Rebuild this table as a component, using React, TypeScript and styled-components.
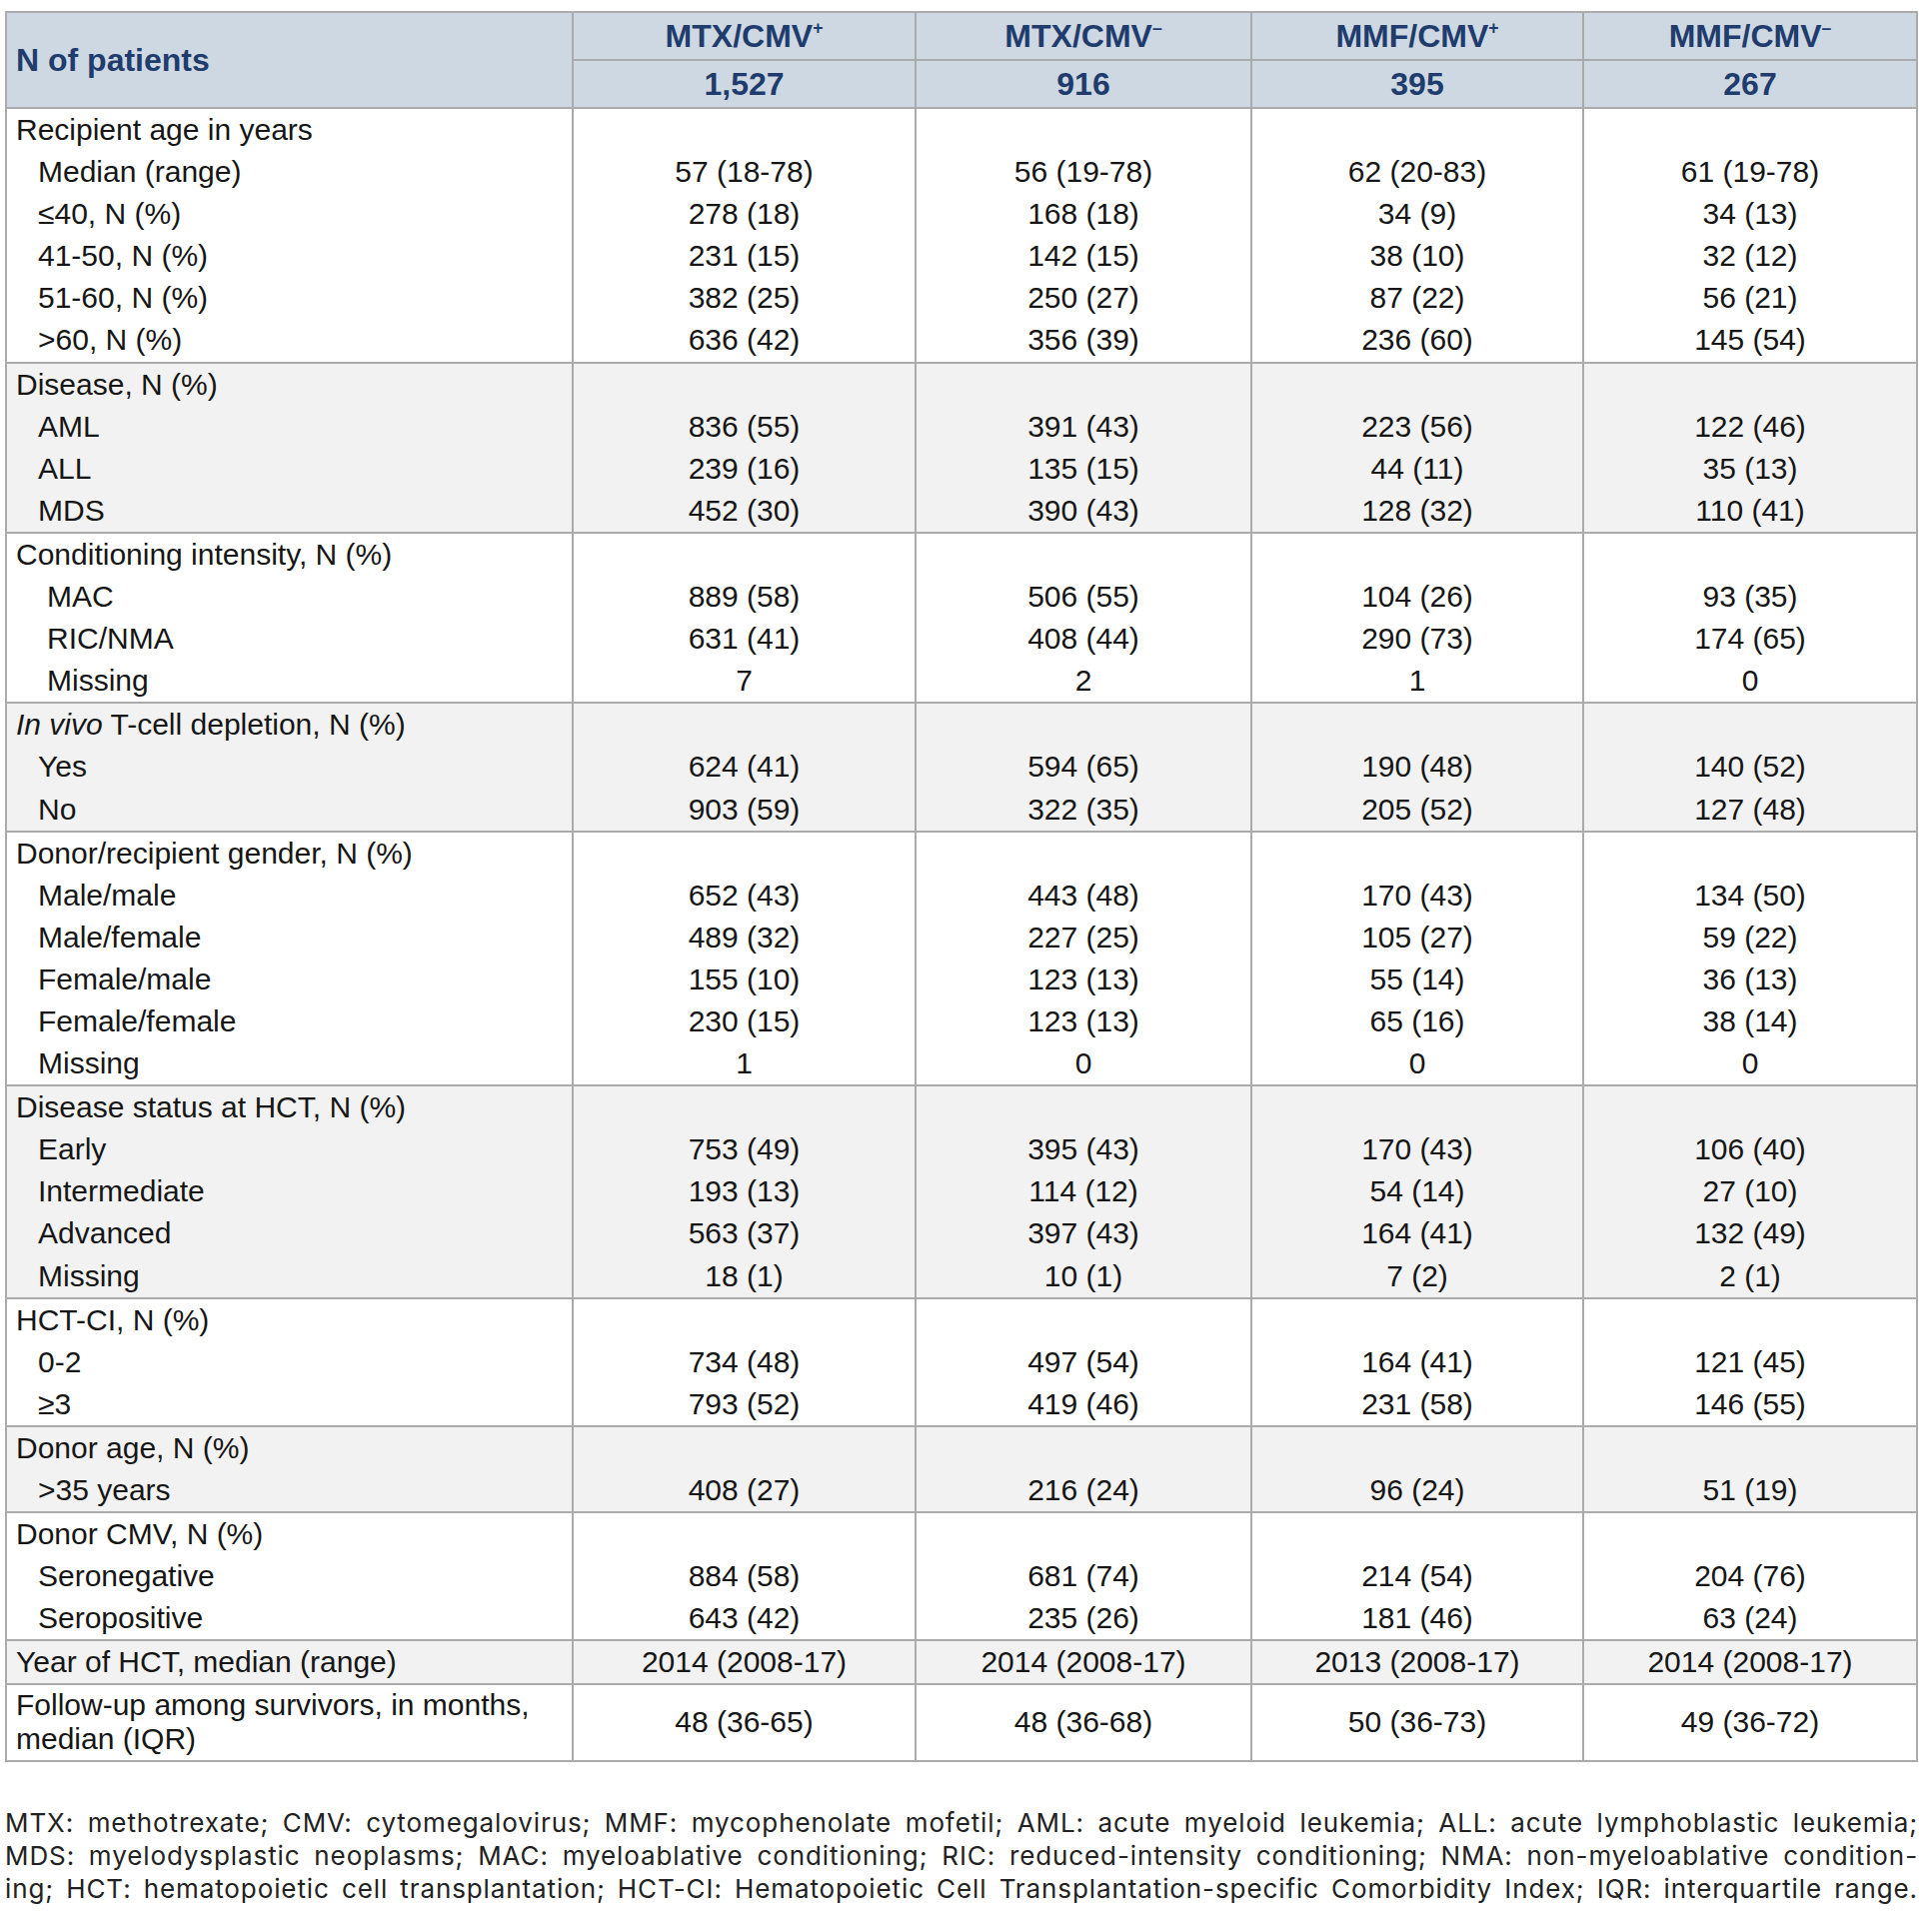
import React from "react";
import styled, { createGlobalStyle } from "styled-components";

const GlobalStyle = createGlobalStyle`
  body {
    margin: 0;
    background: #ffffff;
  }
`;

const Page = styled.div`
  padding: 11px 14px 0 5px;
`;

const Table = styled.table`
  width: 1914px;
  table-layout: fixed;
  border-collapse: collapse;
  font-family: "Liberation Sans", Arial, sans-serif;
  font-size: 30px;
  color: #161616;
  border: 2px solid #ababab;
`;

const HeadCell = styled.th<{ $left?: boolean }>`
  background: #cdd8e3;
  color: #1f3c6c;
  font-weight: 700;
  font-size: 32px;
  line-height: 36px;
  padding: 5px 0 5px ${(p) => (p.$left ? "9px" : "0")};
  text-align: ${(p) => (p.$left ? "left" : "center")};
  border: 2px solid #ababab;

  sup {
    font-size: 0.55em;
    line-height: 0;
    vertical-align: 0.75em;
  }
`;

const Group = styled.tbody<{ $shaded: boolean }>`
  background: ${(p) => (p.$shaded ? "#f2f2f2" : "#ffffff")};
  border-top: 2px solid #ababab;
`;

const LabelCell = styled.td<{ $indent: number; $compact?: boolean }>`
  padding: 3px 0 3.1px ${(p) => 9 + p.$indent}px;
  line-height: ${(p) => (p.$compact ? "34px" : "36px")};
  text-align: left;
  border-right: 2px solid #ababab;
  white-space: nowrap;
`;

const ValueCell = styled.td`
  padding: 3px 0 3.1px;
  line-height: 36px;
  text-align: center;
  vertical-align: middle;
  border-right: 2px solid #ababab;
`;

const Footnote = styled.div`
  margin-top: 44px;
  width: 1914px;
  font-family: Inter, "Open Sans", sans-serif;
  font-size: 26px;
  letter-spacing: 0.9px;
  line-height: 33px;
  color: #222222;
`;

const FootLine = styled.div`
  text-align: justify;
  text-align-last: justify;
  white-space: nowrap;
`;

type Row = { label: React.ReactNode; values: string[] };
type GroupData = {
  title: React.ReactNode;
  values?: string[];
  indent?: number;
  compact?: boolean;
  rows: Row[];
};

const groups: GroupData[] = [
  {
    title: "Recipient age in years",
    rows: [
      { label: "Median (range)", values: ["57 (18-78)", "56 (19-78)", "62 (20-83)", "61 (19-78)"] },
      { label: "≤40, N (%)", values: ["278 (18)", "168 (18)", "34 (9)", "34 (13)"] },
      { label: "41-50, N (%)", values: ["231 (15)", "142 (15)", "38 (10)", "32 (12)"] },
      { label: "51-60, N (%)", values: ["382 (25)", "250 (27)", "87 (22)", "56 (21)"] },
      { label: ">60, N (%)", values: ["636 (42)", "356 (39)", "236 (60)", "145 (54)"] },
    ],
  },
  {
    title: "Disease, N (%)",
    rows: [
      { label: "AML", values: ["836 (55)", "391 (43)", "223 (56)", "122 (46)"] },
      { label: "ALL", values: ["239 (16)", "135 (15)", "44 (11)", "35 (13)"] },
      { label: "MDS", values: ["452 (30)", "390 (43)", "128 (32)", "110 (41)"] },
    ],
  },
  {
    title: "Conditioning intensity, N (%)",
    indent: 31,
    rows: [
      { label: "MAC", values: ["889 (58)", "506 (55)", "104 (26)", "93 (35)"] },
      { label: "RIC/NMA", values: ["631 (41)", "408 (44)", "290 (73)", "174 (65)"] },
      { label: "Missing", values: ["7", "2", "1", "0"] },
    ],
  },
  {
    title: (
      <>
        <i>In vivo</i> T-cell depletion, N (%)
      </>
    ),
    rows: [
      { label: "Yes", values: ["624 (41)", "594 (65)", "190 (48)", "140 (52)"] },
      { label: "No", values: ["903 (59)", "322 (35)", "205 (52)", "127 (48)"] },
    ],
  },
  {
    title: "Donor/recipient gender, N (%)",
    rows: [
      { label: "Male/male", values: ["652 (43)", "443 (48)", "170 (43)", "134 (50)"] },
      { label: "Male/female", values: ["489 (32)", "227 (25)", "105 (27)", "59 (22)"] },
      { label: "Female/male", values: ["155 (10)", "123 (13)", "55 (14)", "36 (13)"] },
      { label: "Female/female", values: ["230 (15)", "123 (13)", "65 (16)", "38 (14)"] },
      { label: "Missing", values: ["1", "0", "0", "0"] },
    ],
  },
  {
    title: "Disease status at HCT, N (%)",
    rows: [
      { label: "Early", values: ["753 (49)", "395 (43)", "170 (43)", "106 (40)"] },
      { label: "Intermediate", values: ["193 (13)", "114 (12)", "54 (14)", "27 (10)"] },
      { label: "Advanced", values: ["563 (37)", "397 (43)", "164 (41)", "132 (49)"] },
      { label: "Missing", values: ["18 (1)", "10 (1)", "7 (2)", "2 (1)"] },
    ],
  },
  {
    title: "HCT-CI, N (%)",
    rows: [
      { label: "0-2", values: ["734 (48)", "497 (54)", "164 (41)", "121 (45)"] },
      { label: "≥3", values: ["793 (52)", "419 (46)", "231 (58)", "146 (55)"] },
    ],
  },
  {
    title: "Donor age, N (%)",
    rows: [{ label: ">35 years", values: ["408 (27)", "216 (24)", "96 (24)", "51 (19)"] }],
  },
  {
    title: "Donor CMV, N (%)",
    rows: [
      { label: "Seronegative", values: ["884 (58)", "681 (74)", "214 (54)", "204 (76)"] },
      { label: "Seropositive", values: ["643 (42)", "235 (26)", "181 (46)", "63 (24)"] },
    ],
  },
  {
    title: "Year of HCT, median (range)",
    values: ["2014 (2008-17)", "2014 (2008-17)", "2013 (2008-17)", "2014 (2008-17)"],
    rows: [],
  },
  {
    title: (
      <>
        Follow-up among survivors, in months,
        <br />
        median (IQR)
      </>
    ),
    values: ["48 (36-65)", "48 (36-68)", "50 (36-73)", "49 (36-72)"],
    compact: true,
    rows: [],
  },
];

const arms = [
  { name: "MTX/CMV", sign: "+", n: "1,527" },
  { name: "MTX/CMV", sign: "–", n: "916" },
  { name: "MMF/CMV", sign: "+", n: "395" },
  { name: "MMF/CMV", sign: "–", n: "267" },
];

function Values({ values }: { values?: string[] }) {
  return (
    <>
      {[0, 1, 2, 3].map((i) => (
        <ValueCell key={i}>{values ? values[i] : ""}</ValueCell>
      ))}
    </>
  );
}

export default function App() {
  return (
    <Page>
      <GlobalStyle />
      <Table>
        <colgroup>
          <col style={{ width: 567 }} />
          <col style={{ width: 343 }} />
          <col style={{ width: 336 }} />
          <col style={{ width: 332 }} />
          <col style={{ width: 334 }} />
        </colgroup>
        <thead>
          <tr>
            <HeadCell $left rowSpan={2}>
              N of patients
            </HeadCell>
            {arms.map((a, i) => (
              <HeadCell key={i}>
                {a.name}
                <sup>{a.sign}</sup>
              </HeadCell>
            ))}
          </tr>
          <tr>
            {arms.map((a, i) => (
              <HeadCell key={i}>{a.n}</HeadCell>
            ))}
          </tr>
        </thead>
        {groups.map((g, gi) => (
          <Group key={gi} $shaded={gi % 2 === 1}>
            <tr>
              <LabelCell $indent={0} $compact={g.compact}>
                {g.title}
              </LabelCell>
              <Values values={g.values} />
            </tr>
            {g.rows.map((r, ri) => (
              <tr key={ri}>
                <LabelCell $indent={g.indent ?? 22}>{r.label}</LabelCell>
                <Values values={r.values} />
              </tr>
            ))}
          </Group>
        ))}
      </Table>
      <Footnote>
        <FootLine>
          MTX: methotrexate; CMV: cytomegalovirus; MMF: mycophenolate mofetil; AML: acute myeloid leukemia; ALL: acute lymphoblastic leukemia;
        </FootLine>
        <FootLine>
          MDS: myelodysplastic neoplasms; MAC: myeloablative conditioning; RIC: reduced-intensity conditioning; NMA: non-myeloablative condition-
        </FootLine>
        <FootLine>
          ing; HCT: hematopoietic cell transplantation; HCT-CI: Hematopoietic Cell Transplantation-specific Comorbidity Index; IQR: interquartile range.
        </FootLine>
      </Footnote>
    </Page>
  );
}
